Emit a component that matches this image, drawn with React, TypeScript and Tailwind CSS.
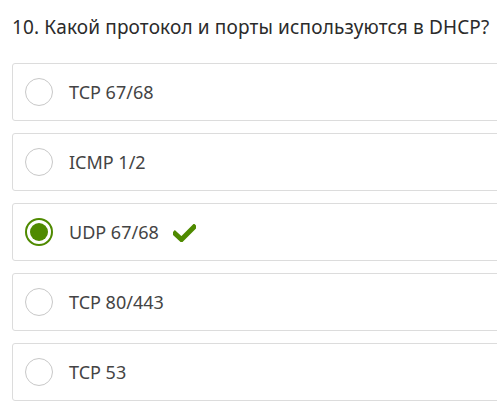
import React from 'react';

const options = [
  { label: 'TCP 67/68', selected: false },
  { label: 'ICMP 1/2', selected: false },
  { label: 'UDP 67/68', selected: true },
  { label: 'TCP 80/443', selected: false },
  { label: 'TCP 53', selected: false },
];

function Radio({ selected }: { selected: boolean }) {
  if (selected) {
    return (
      <div className="w-[28px] h-[28px] rounded-full border-2 border-[#4f8a00] flex items-center justify-center shrink-0">
        <div className="w-[18px] h-[18px] rounded-full bg-[#4f8a00]" />
      </div>
    );
  }
  return <div className="w-[28px] h-[28px] rounded-full border border-[#c8c8c8] shrink-0" />;
}

export default function App() {
  return (
    <div className="bg-white min-h-screen overflow-hidden font-['Noto_Sans',sans-serif]">
      <h1 className="pl-[12px] pt-[14px] text-[19px] leading-[26px] text-[#2b2b2b] whitespace-nowrap tracking-[0.15px]">
        10. Какой протокол и порты используются в DHCP?
      </h1>
      <div className="mt-[23px] ml-[12px] w-[500px] flex flex-col gap-[12px]">
        {options.map((o) => (
          <div
            key={o.label}
            className="h-[58px] border border-[#dcdcdc] rounded-[3px] flex items-center pl-[12px]"
          >
            <Radio selected={o.selected} />
            <span className="ml-[16px] text-[18px] text-[#444]">{o.label}</span>
            {o.selected && (
              <svg className="ml-[14px] mt-[1px]" width="23" height="18" viewBox="0 0 23 18">
                <path d="M2 9.5 L8.5 15.5 L21 3" fill="none" stroke="#4f8a00" strokeWidth="5" strokeLinecap="square" />
              </svg>
            )}
          </div>
        ))}
      </div>
    </div>
  );
}
